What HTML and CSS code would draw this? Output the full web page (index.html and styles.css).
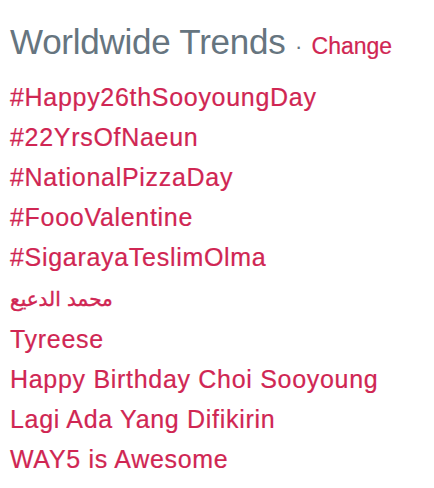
FILE: index.html
```html
<!DOCTYPE html>
<html>
<head>
<meta charset="utf-8">
<link rel="stylesheet" href="styles.css">
</head>
<body>
<div class="trends">
  <h2 class="title">Worldwide Trends <span class="dot">·</span> <a class="change" href="#">Change</a></h2>
  <ul class="list">
    <li><a href="#">#Happy26thSooyoungDay</a></li>
    <li><a href="#">#22YrsOfNaeun</a></li>
    <li><a href="#">#NationalPizzaDay</a></li>
    <li><a href="#">#FoooValentine</a></li>
    <li><a href="#">#SigarayaTeslimOlma</a></li>
    <li><a href="#" class="ar">محمد الدعيع</a></li>
    <li><a href="#">Tyreese</a></li>
    <li><a href="#">Happy Birthday Choi Sooyoung</a></li>
    <li><a href="#">Lagi Ada Yang Difikirin</a></li>
    <li><a href="#">WAY5 is Awesome</a></li>
  </ul>
</div>
</body>
</html>
```
FILE: styles.css
```css
html, body {
  margin: 0;
  padding: 0;
  background: #ffffff;
}
.trends {
  padding: 22px 10px 0 10px;
  font-family: "Liberation Sans", Arial, "DejaVu Sans", sans-serif;
}
.title {
  margin: 0;
  font-size: 35px;
  font-weight: normal;
  line-height: 40px;
  color: #66757f;
  white-space: nowrap;
  letter-spacing: -0.25px;
}
.dot {
  font-size: 22px;
  color: #66757f;
}
.change {
  font-size: 23px;
  color: #d02653;
  text-decoration: none;
  letter-spacing: 0;
  -webkit-text-stroke: 0.2px #d02653;
}
.list {
  list-style: none;
  margin: 10px 0 0 0;
  padding: 0;
}
.list li {
  font-size: 25px;
  line-height: 40px;
  letter-spacing: 0.7px;
}
.list a {
  color: #d02653;
  text-decoration: none;
  -webkit-text-stroke: 0.2px #d02653;
}
.list a.ar {
  font-family: "DejaVu Sans", sans-serif;
  font-size: 20px;
  letter-spacing: 0;
  -webkit-text-stroke: 0.4px #d02653;
}
```
